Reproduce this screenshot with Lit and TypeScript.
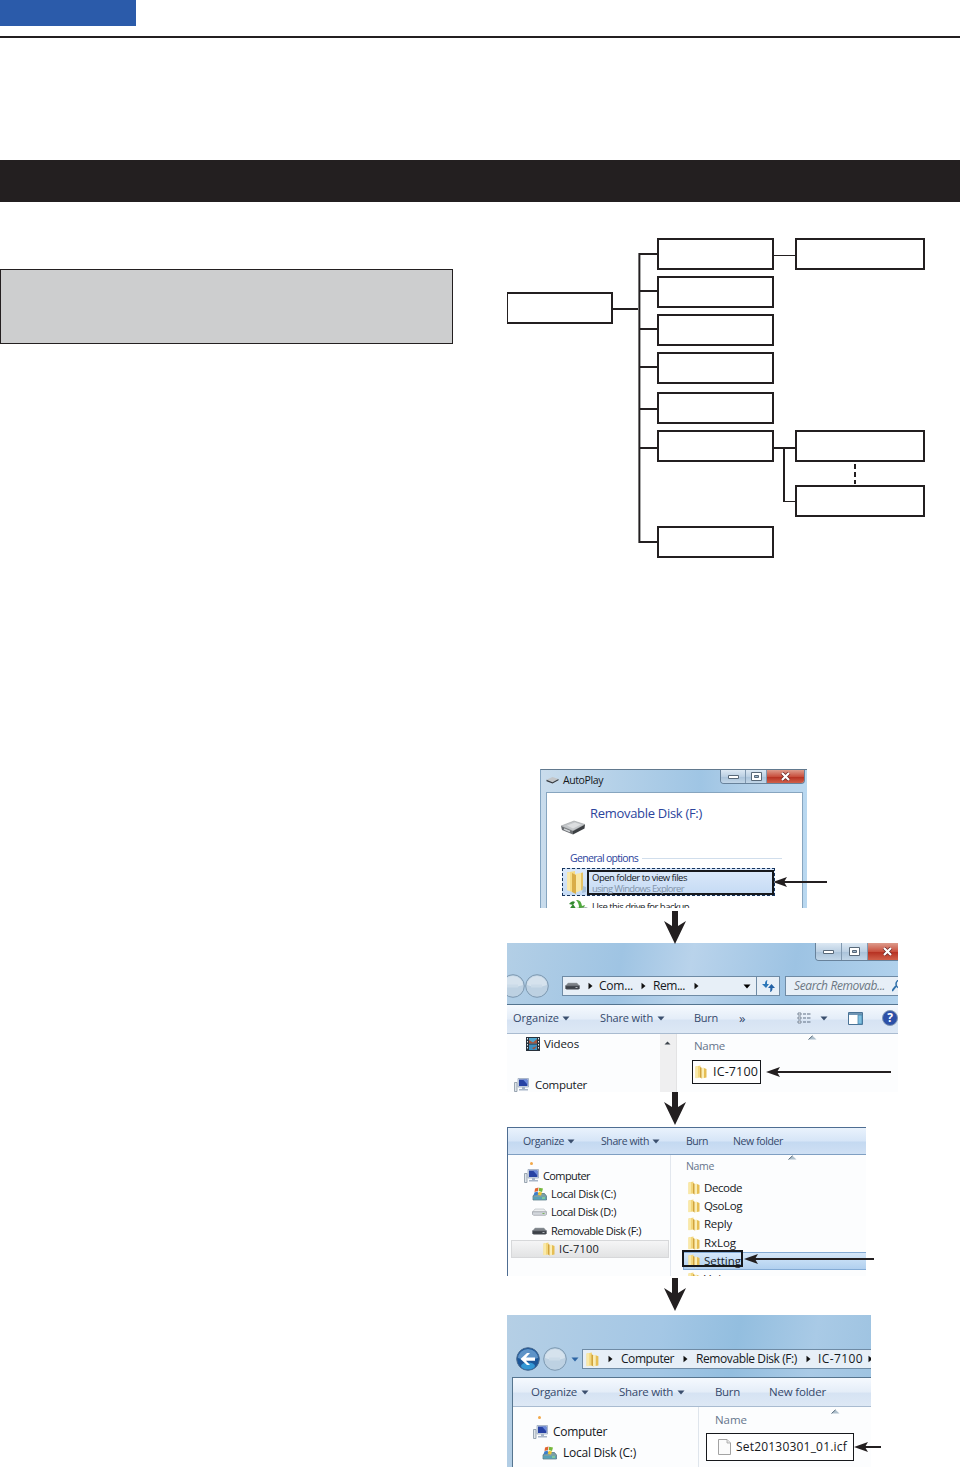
import { LitElement, css, html, svg } from 'lit';
import { customElement } from 'lit/decorators.js';

const ctx = document.createElement('canvas').getContext('2d')!;

// text set to a given width in px, by spreading the letters
const label = (text: string, width: number, size = 11, cls = '') => {
  ctx.font = `${cls.includes('search') ? 'italic ' : ''}${size}px "Open Sans"`;
  const spacing = (width - ctx.measureText(text).width) / text.length;
  return html`<span
    class="label ${cls}"
    style="font-size:${size}px;letter-spacing:${spacing.toFixed(3)}px"
    >${text}</span
  >`;
};

const folder = (size = 14) => html`<svg width=${size} height=${size} viewBox="0 0 14 14">
  <path d="M1.500 1.500 6.500.5v12l-5 .5z" fill="#f3d67c" />
  <path d="M1.500 1.500 4 1v12l-2.500.200z" fill="#f9e9a8" />
  <path d="M6 2 8 3v10.500l-2-1z" fill="#d0a33c" />
  <path d="M7.500 3 10 2.500V13l-2.500.5z" fill="#fbeeb5" />
  <path d="M10 3 12.500 4v8.500L10 13z" fill="#e6be54" />
</svg>`;

const bigFolder = html`<svg width="21" height="23" viewBox="0 0 21 23">
  <path d="M1 1.500 9 0v22L1 19z" fill="#f6dc85" />
  <path d="M1 1.500 4 1v19l-3-1z" fill="#fae9ab" />
  <path d="M9 3 17 1.500v17L9 22z" fill="#f9e7a4" />
  <path d="M6 2 10 4v19l-4-2z" fill="#d9ad48" />
  <path d="M15 2l2-.5v17l-2 1z" fill="#e6c263" />
  <path d="M17 15l3 1v5l-4 1z" fill="#a6bfd8" />
</svg>`;

const computer = html`<svg width="16" height="14" viewBox="0 0 16 14">
  <path d="M.5 4.500h2.500v9H.5z" fill="#dfe5ea" stroke="#8794a2" stroke-width=".8" />
  <path d="M4 .5h10.500v8.500H4z" fill="#dbe3ee" stroke="#9aa8be" stroke-width=".8" />
  <path d="M5 1.500h8.500v6.500H5z" fill="#2742a4" />
  <path d="M9 1.500h4.500v5z" fill="#6c8bdc" />
  <path d="M8 9h3v2H8zM5 11h9v1.500H5z" fill="#a7b5c8" />
</svg>`;

const videos = html`<svg width="14" height="14" viewBox="0 0 14 14">
  <path d="M0 0h14v14H0z" fill="#27313c" />
  <path d="M3 1h8v5.500H3z" fill="#4fa6cf" />
  <path d="M3 7.500h8V13H3z" fill="#3c91c4" />
  <path d="M3 3l4 2.500L11 2v4.500H3zM3 9l3 2 5-2-3 3.500z" fill="#a5553f" />
  <path d="M1.500 1v12M12.500 1v12" stroke="#e9eff3" stroke-dasharray="1.500 1.500" />
</svg>`;

const localDisk = html`<svg width="15" height="14" viewBox="0 0 15 14">
  <path d="M1 9 3 6.500h9.500L14.500 9v4H1z" fill="#7aa0a6" stroke="#496f7c" stroke-width=".7" />
  <path d="M1.500 10h12.500v2.500H1.500z" fill="#57a2b8" />
  <path d="M10 11h3" stroke="#a5ec83" />
  <path d="M3 1.500 6.500.5 6 4 2.500 5z" fill="#e1642f" />
  <path d="M7.200.7 11 1.500 10 5 6.700 4z" fill="#77b83c" />
  <path d="M2.300 5.500 6 4.500 5.500 8 2 8.500z" fill="#3c7ecb" />
  <path d="M6.600 4.700 10 5.500 9 8.500 6 8z" fill="#f2c530" />
</svg>`;

const drive = (dark = false) => html`<svg width="15" height="8" viewBox="0 0 15 8">
  <path d="M3 1h9l2.500 3H.5z" fill=${dark ? '#7b8086' : '#eef0f2'} stroke="#a2a8af" stroke-width=".5" />
  <path d="M.5 3.800h14v2.500l-1 1H1.500l-1-1z" fill=${dark ? '#3c4148' : '#d3d7dc'} stroke=${dark ? '#6d7279' : '#8b9198'} stroke-width=".6" />
  <path d="M10.500 5.500h2" stroke=${dark ? '#b0b6bc' : '#77b35b'} />
</svg>`;

const removable = html`<svg width="26" height="15" viewBox="0 0 26 15">
  <path d="M1 6 14 1l11 3.500L13 11z" fill="#c3c6c9" stroke="#8f9295" stroke-width=".5" />
  <path d="M7 5.500 15 2.500l6 2-8 4z" fill="#dcdee0" />
  <path d="M1 6l12 5v3.500L2 10z" fill="#6b6e72" />
  <path d="M25 4.500 13 11v3.500l11.500-6z" fill="#3c3f43" />
  <path d="M4 9l6 2.500" stroke="#cfd2d5" stroke-width="1.500" />
</svg>`;

const file = html`<svg width="13" height="16" viewBox="0 0 13 16">
  <path d="M.5.500h8.500l3.500 3.500v11.500H.5z" fill="#fbfbfb" stroke="#a3a3a3" />
  <path d="M9 .5V4h3.500" fill="#e4e4e4" stroke="#a3a3a3" stroke-width=".8" />
</svg>`;

const down = html`<svg width="8" height="5" viewBox="0 0 8 5"><path d="M.5.500h7L4 4.500z" /></svg>`;
const right = html`<svg width="5" height="8" viewBox="0 0 5 8"><path d="M.5.800 4.500 4 .5 7.200z" fill="#111" /></svg>`;
const sort = html`<svg class="sort" width="9" height="5" viewBox="0 0 9 5">
  <path d="M.5 4.500 4.500.800 8.500 4.500z" fill="#aebfcc" /><path d="M.5 4.500l4-3.700" stroke="#54697a" />
</svg>`;

const refresh = html`<svg width="15" height="14" viewBox="0 0 15 14">
  <path d="M6.500 1C4.500 1.500 4 3 4 5H1l4 4 3-4H6c0-2 0-3 .5-4z" fill="#2c77b8" />
  <path d="M9 13c2-.5 2.500-2 2.500-4H14L10.500 5 7 9h2.300c0 2 0 3-.3 4z" fill="#2361a5" />
</svg>`;

const views = html`<svg width="14" height="12" viewBox="0 0 14 12">
  <path d="M1 1h3v2H1zM1 5h3v2H1zM1 9h3v2H1z" fill="#fff" stroke="#5f6f83" stroke-width=".8" />
  <path d="M6 2h3M10 2h3.500M6 6h3M10 6h3.500M6 10h3M10 10h3.500" stroke="#5f6f83" />
</svg>`;

const pane = html`<svg width="15" height="13" viewBox="0 0 15 13">
  <path d="M.5.500h14v12H.5z" fill="#fff" stroke="#4a7396" />
  <path d="M1 1h13v2H1z" fill="#7095b4" /><path d="M10 3h4v9h-4z" fill="#7fc0e1" stroke="#4a86ac" stroke-width=".8" />
</svg>`;

const nav = (back = false) => html`<svg width="24" height="24" viewBox="0 0 24 24">
  <circle cx="12" cy="12" r="11.300" fill=${back ? '#1c5698' : '#bdd1e2'} stroke=${back ? '#496b90' : '#7c98b0'} />
  ${back
    ? svg`<path d="M2 11a10 9 0 0 1 20 0q-10 4-20 0z" fill="#5e93c7" /><ellipse cx="12" cy="19" rx="7" ry="3.500" fill="#3397d4" />
        <path d="M4.500 12 11 6h3l-4 4.500h9v3.200h-9L14 18h-3z" fill="#fff" />`
    : svg`<path d="M2 11a10 9 0 0 1 20 0q-10 4-20 0z" fill="#d5e2ed" /><path d="M6 12h11" stroke="#cbdbe8" stroke-width="3" />`}
</svg>`;

const backup = html`<svg width="25" height="14" viewBox="0 0 25 14">
  <path d="M10 1q5-1 6 6l3-1-3 7-6-4 3-.5Q13 4 10 1z" fill="#50a83e" />
  <path d="M2 12l5-7 4 6-3-.5q-3 0-4 3zM3 5q3-4 6-2l-2 3z" fill="#328a2f" />
  <path d="M14 9l6-1 4 2-5 3z" fill="#a3aaae" />
</svg>`;

const windowButtons = html`<div class="win-buttons">
  <i><svg width="11" height="4" viewBox="0 0 11 4"><path d="M.5.500h10v3H.5z" fill="#fff" stroke="#586878" /></svg></i>
  <i><svg width="11" height="9" viewBox="0 0 11 9"><path d="M.5.500h10v8H.5z" fill="#fff" stroke="#586878" /><path d="M3.500 3.500h4v2h-4z" fill="#9db5cb" stroke="#586878" /></svg></i>
  <i class="close"><svg width="11" height="9" viewBox="0 0 11 9"><path d="M2 1l7 7M9 1 2 8" stroke="#6b2626" stroke-width="3.600" /><path d="M2 1l7 7M9 1 2 8" stroke="#fff" stroke-width="2.200" /></svg></i>
</div>`;

const stepArrow = html`<svg class="step" width="22" height="33" viewBox="0 0 22 33">
  <path d="M8 0h6v15l8-5-11 23L0 10l8 5z" fill="#231f20" />
</svg>`;

const callout = (length: number) => html`<svg class="callout" width=${length} height="12" viewBox="0 0 ${length} 12">
  <path d="M8 6h${length - 8}" stroke="#231f20" stroke-width="2" />
  <path d="M0 6 14 1l-3 5 3 5z" fill="#231f20" />
</svg>`;

@customElement('folder-tree')
export class FolderTree extends LitElement {
  nodes = [
    [150, 0, 117], [150, 38, 117], [150, 76, 117], [150, 114, 117], [150, 154, 117],
    [150, 192, 117], [150, 288, 117], [288, 0, 130], [288, 192, 130], [288, 247, 130],
  ];

  branches = [16, 53, 91, 129, 171, 210, 304];

  render() {
    return html`<svg width="453" height="320" viewBox="0 0 453 320" stroke="#231f20" stroke-width="2" fill="none">
      <path d="M0 54h106v32H0zM1 56v28h103V56z" fill="#231f20" fill-rule="evenodd" stroke="none" />
      <path d="M106 71h26" />
      <path d="M131.500 15v290" stroke="#777" stroke-width="1" />
      <path d="M132.500 15v290" stroke-width="1" />
      <path d="M133.500 15v290" stroke="#aaa" stroke-width="1" />
      ${this.branches.map((y) => svg`<path d="M133 ${y}h17" />`)}
      ${this.nodes.map(([x, y, w]) => svg`<rect x=${x + 1} y=${y + 1} width=${w - 2} height="30" />`)}
      <path d="M267 17.500h21M277 263.500h11" stroke-width="1" />
      <path d="M267 210h21M277 210v54" />
      <path d="M348 226v20" stroke-dasharray="5 3" />
    </svg>`;
  }

  static styles = css`
    :host,
    svg {
      display: block;
    }
  `;
}

@customElement('app-root')
export class AppRoot extends LitElement {
  autoPlay() {
    return html`<section class="window autoplay">
      <div class="title">
        <svg width="13" height="8" viewBox="0 0 26 15">
          <path d="M1 7 13 1.500 25 5.500 13 12z" fill="#c3c6c9" />
          <path d="M1 7l12 5 12-6.500V8l-12 6.500L1 10z" fill="#36393d" />
        </svg>
        ${label('AutoPlay', 40, 10.5, 'dark')} ${windowButtons}
      </div>
      <div class="panel">
        <div class="disk">${removable}${label('Removable Disk (F:)', 112, 13, 'blue')}</div>
        <div class="group">${label('General options', 68, 10.5, 'blue')}<hr /></div>
        <div class="option">
          ${bigFolder}
          <div class="marked">
            ${label('Open folder to view files', 95, 9.5, 'dark')}
            ${label('using Windows Explorer', 92, 9.5, 'muted')}
          </div>
        </div>
        <div class="option-next">${backup}${label('Use this drive for backup', 97, 9.5, 'dark')}</div>
      </div>
    </section>`;
  }

  removableDisk() {
    return html`<section class="window explorer-b">
      ${windowButtons}
      <div class="address">
        <div class="navs">${nav()}${nav()}</div>
        <b></b>
        <div class="path">
          ${drive(true)}${right}${label('Com...', 34, 12, 'dark')}${right}${label('Rem...', 32, 12, 'dark')}${right}
          <span class="drop">${down}</span>
          <span class="reload">${refresh}</span>
        </div>
        <div class="find">
          ${label('Search Removab...', 91, 12, 'search')}
          <svg width="6" height="12" viewBox="0 0 6 12"><path d="M0 11 4 6" stroke="#2d6ea9" stroke-width="2" /><circle cx="8" cy="4" r="4" fill="none" stroke="#2d6ea9" stroke-width="1.500" /></svg>
        </div>
      </div>
      <div class="toolbar">
        ${label('Organize', 46)}${down}${label('Share with', 53)}${down}${label('Burn', 24)}${label('»', 8, 13)}
        ${views}${down}${pane}
        <span class="help">?</span>
      </div>
      <div class="body">
        <div class="side">
          <div class="row videos">${videos}${label('Videos', 35, 11.5, 'dark')}</div>
          <div class="row">${computer}${label('Computer', 52, 11.5, 'dark')}</div>
        </div>
        <div class="scroll"><svg width="7" height="4" viewBox="0 0 7 4"><path d="M.5 3.500 3.500.500l3 3z" fill="#3d444c" /></svg></div>
        <div class="list">
          <div class="head">${label('Name', 31, 11.5, 'name')}${sort}</div>
          <div class="marked">${folder()}${label('IC-7100', 45, 12.5, 'dark')}</div>
        </div>
      </div>
    </section>`;
  }

  ic7100() {
    const folders: [string, number][] = [['Decode', 38], ['QsoLog', 38], ['Reply', 28], ['RxLog', 32], ['Setting', 37], ['Voice', 30]];
    return html`<section class="window explorer-c">
      <div class="toolbar">
        ${label('Organize', 41, 10.5)}${down}${label('Share with', 48, 10.5)}${down}${label('Burn', 22, 10.5)}${label('New folder', 50, 10.5)}
      </div>
      <div class="body">
        <div class="side">
          <div class="row l0 star">${computer}${label('Computer', 47, 11, 'dark')}</div>
          <div class="row l1">${localDisk}${label('Local Disk (C:)', 65, 11, 'dark')}</div>
          <div class="row l1">${drive()}${label('Local Disk (D:)', 65, 11, 'dark')}</div>
          <div class="row l1">${drive(true)}${label('Removable Disk (F:)', 90, 11, 'dark')}</div>
          <div class="row l2">${folder()}${label('IC-7100', 40, 11, 'dark')}</div>
        </div>
        <div class="list">
          <div class="head">${label('Name', 28, 10.5, 'name')}${sort}</div>
          ${folders.map(
            ([name, width]) => html`<div class="row ${name === 'Setting' ? 'selected' : ''}">
              ${folder()}${label(name, width, 11.5, 'dark')}
            </div>`
          )}
        </div>
      </div>
    </section>`;
  }

  setting() {
    return html`<section class="window explorer-d">
      <div class="address">
        ${nav(true)}${nav()}<span class="recent">${down}</span>
        <div class="path">
          ${folder(15)}${right}${label('Computer', 53, 12, 'dark')}${right}${label('Removable Disk (F:)', 101, 12, 'dark')}
          ${right}${label('IC-7100', 45, 12, 'dark')}${right}
        </div>
      </div>
      <div class="inner">
        <div class="toolbar">
          ${label('Organize', 46, 11.5)}${down}${label('Share with', 54, 11.5)}${down}${label('Burn', 25, 11.5)}${label('New folder', 57, 11.5)}
        </div>
        <div class="body">
          <div class="side">
            <div class="row l0 star">${computer}${label('Computer', 54, 12, 'dark')}</div>
            <div class="row l1">${localDisk}${label('Local Disk (C:)', 73, 12, 'dark')}</div>
          </div>
          <div class="list">
            <div class="head">${label('Name', 32, 11.5, 'name')}${sort}</div>
            <div class="marked">${file}${label('Set20130301_01.icf', 111, 12, 'dark')}</div>
          </div>
        </div>
      </div>
    </section>`;
  }

  render() {
    return html`
      <div class="tab"></div>
      <div class="rule"></div>
      <div class="band"></div>
      <main>
        <div class="note"></div>
        <div class="figures">
          <folder-tree></folder-tree>
          <div class="frame a">${this.autoPlay()}${callout(54)}</div>
          ${stepArrow}
          <div class="frame b">${this.removableDisk()}${callout(125)}</div>
          ${stepArrow}
          <div class="frame c">${this.ic7100()}${callout(130)}</div>
          ${stepArrow}
          <div class="frame d">${this.setting()}${callout(27)}</div>
        </div>
      </main>
    `;
  }

  static styles = css`
    :host {
      display: block;
      height: 1467px;
      overflow: hidden;
      background: #fff;
      font-family: 'Open Sans', 'Noto Sans', sans-serif;
    }

    * {
      box-sizing: border-box;
    }

    svg {
      display: block;
      flex: none;
    }

    .tab {
      width: 136px;
      height: 26px;
      background: #2b5baa;
    }

    .rule {
      height: 2px;
      margin-top: 10px;
      background: #231f20;
    }

    .band {
      height: 42px;
      margin-top: 122px;
      background: #231f20;
    }

    main {
      display: grid;
      grid-template-columns: 507px 453px;
    }

    .note {
      width: 453px;
      height: 75px;
      margin-top: 67px;
      border: 1px solid #231f20;
      background: #cdcecf;
    }

    .figures {
      padding-top: 36px;
    }

    .frame {
      position: relative;
    }

    .frame.a {
      margin: 211px 0 3px 33px;
    }

    .frame.b {
      margin-top: -1px;
    }

    .frame.c {
      margin: 2px 0;
    }

    .frame.d {
      margin-top: 4px;
    }

    .step {
      position: relative;
      z-index: 1;
      margin-left: 157px;
    }

    .callout {
      position: absolute;
    }

    .a .callout {
      left: 233px;
      top: 107px;
    }

    .b .callout {
      left: 259px;
      top: 123px;
    }

    .c .callout {
      left: 237px;
      top: 126px;
    }

    .d .callout {
      left: 347px;
      top: 126px;
    }

    .window {
      overflow: hidden;
    }

    .label {
      display: block;
      flex: none;
      line-height: 14px;
      white-space: pre;
      color: #35496b;
    }

    .dark {
      color: #15181c;
    }

    .blue {
      color: #2c449c;
    }

    .muted {
      color: #8293a8;
    }

    .name {
      color: #66758c;
    }

    .search {
      font-style: italic;
      color: #6c7783;
    }

    .win-buttons {
      display: grid;
      border: 1px solid #68829b;
      border-top: 0;
      border-radius: 0 0 4px 4px;
      overflow: hidden;
    }

    .win-buttons i {
      display: grid;
      place-items: center;
      border-right: 1px solid #8199b0;
      background: linear-gradient(#dce8f3, #bcd0e3 50%, #a9c2d9 52%, #c2d6e8);
    }

    .win-buttons .close {
      border: 0;
      background: linear-gradient(#dd9b8c, #c9513f 50%, #b52f20 52%, #d0604a);
    }

    .toolbar {
      display: grid;
      align-items: center;
      fill: #3b4f6e;
      border-bottom: 1px solid #a9bbd0;
      background: linear-gradient(#f5f9fe, #e4edf8 50%, #d6e3f3 54%, #dde8f5);
    }

    .body,
    .row,
    .path,
    .address {
      display: flex;
    }

    .row,
    .path,
    .address {
      align-items: center;
    }

    .side .row {
      height: 18px;
      gap: 5px;
    }

    .head {
      display: flex;
      position: relative;
    }

    .sort {
      position: absolute;
      top: -6px;
    }

    .star {
      position: relative;
    }

    .star::before {
      content: '';
      position: absolute;
      top: -5px;
      left: 25px;
      width: 3px;
      height: 3px;
      border-radius: 50%;
      background: #f2a94b;
    }

    /* AutoPlay dialog */
    .autoplay {
      width: 267px;
      height: 139px;
      padding: 0 4px 0 5px;
      background: linear-gradient(90deg, #c9dcec, #b3d0e8 30%, #9fc5e4 60%, #b9d3ea 85%, #b9d8f0);
      border-left: 1px solid #84a5c2;
      border-top: 1px solid #62798e;
    }

    .title {
      display: flex;
      align-items: center;
      height: 22px;
      gap: 4px;
      padding-bottom: 2px;
    }

    .title .win-buttons {
      grid-template-columns: 25px 21px 37px;
      align-self: flex-start;
      height: 14px;
      margin: 0 -2px 0 auto;
    }

    .autoplay .panel {
      height: 116px;
      padding-left: 16px;
      border: solid #87a5bf;
      border-width: 1px 1px 0;
      background: #fff;
    }

    .disk {
      display: flex;
      gap: 2px;
      height: 58px;
      padding-top: 13px;
    }

    .disk svg {
      margin-top: 14px;
      margin-left: -3px;
    }

    .disk .label {
      margin-left: 2px;
    }

    .group {
      display: flex;
      align-items: center;
      height: 14px;
      gap: 4px;
      padding-left: 7px;
    }

    .group hr {
      width: 140px;
      margin: 0;
      border: 0;
      border-top: 1px solid #d1deec;
    }

    .option {
      display: flex;
      align-items: center;
      width: 213px;
      height: 28px;
      margin: 3px 0 0 -1px;
      padding-left: 3px;
      border: 1px dashed #17345c;
      background: linear-gradient(#dce9fa, #c4daf4);
    }

    .option .marked {
      flex: 1;
      height: 25px;
      padding-left: 3px;
      border: 2px solid #16181c;
    }

    .option .label {
      line-height: 11px;
    }

    .option-next {
      display: flex;
      gap: 1px;
      padding: 3px 0 0 3px;
    }

    .option-next .label {
      margin-top: 1px;
    }

    /* Removable disk window */
    .explorer-b {
      width: 391px;
      height: 149px;
      background: linear-gradient(100deg, #b3cfe6, #9fc4e3 28%, #b9d3eb 45%, #9dc3e3 70%, #b4d4ee);
    }

    .explorer-b .win-buttons {
      grid-template-columns: 26px 26px 38px;
      width: 92px;
      height: 18px;
      margin-left: 308px;
    }

    .explorer-b .address {
      height: 43px;
      padding-top: 7px;
    }

    .navs {
      display: flex;
      margin-left: -6px;
    }

    .explorer-b b {
      width: 7px;
      height: 1px;
      margin: 0 4px;
      background: #7892aa;
    }

    .path,
    .find {
      height: 20px;
      border: 1px solid #6f8ba5;
      background: #e7eff7;
    }

    .explorer-b .path {
      display: grid;
      grid-template-columns: 23px 11px 42px 12px 41px 34px 28px 24px;
      width: 218px;
      margin-left: 5px;
      padding-left: 2px;
    }

    .drop {
      padding-left: 15px;
    }

    .reload {
      display: grid;
      place-items: center;
      align-self: stretch;
      border-left: 1px solid #6f8ba5;
    }

    .find {
      display: flex;
      gap: 7px;
      width: 120px;
      flex: none;
      align-items: center;
      margin-left: 5px;
      padding-left: 8px;
    }

    .explorer-b .toolbar {
      grid-template-columns: 49px 38px 57px 37px 45px 58px 23px 28px 34px 16px;
      height: 30px;
      padding: 0 0 2px 6px;
      border-top: 1px solid #54748f;
    }

    .help {
      width: 16px;
      height: 16px;
      border: 1px solid #8096b2;
      border-radius: 50%;
      background: #2c50a8;
      color: #fff;
      font-size: 12px;
      font-weight: bold;
      line-height: 14px;
      text-align: center;
    }

    .body {
      background: #fcfdfe;
    }

    .explorer-b .body {
      height: 60px;
    }

    .explorer-b .side {
      width: 153px;
      padding-left: 7px;
    }

    .explorer-b .side .row {
      height: 20px;
    }

    .explorer-b .side .videos {
      margin: 0 0 21px;
      padding-left: 12px;
      gap: 4px;
    }

    .scroll {
      width: 17px;
      padding: 7px 0 0 4px;
      background: #efeff0;
      border-right: 1px solid #e3e3e4;
    }

    .explorer-b .list {
      padding: 5px 0 0 15px;
    }

    .explorer-b .head {
      padding-left: 2px;
    }

    .explorer-b .head .sort {
      top: -4px;
      left: 116px;
    }

    .explorer-b .marked {
      display: flex;
      align-items: center;
      gap: 5px;
      width: 69px;
      height: 24px;
      margin-top: 7px;
      padding-left: 1px;
      border: 1.500px solid #16181c;
      background: #fff;
    }

    /* IC-7100 folder window */
    .explorer-c {
      width: 359px;
      height: 149px;
      border: solid #4e6d92;
      border-width: 1px 0 0 1px;
    }

    .explorer-c .toolbar {
      grid-template-columns: 44px 34px 51px 34px 47px 60px;
      height: 27px;
      padding-left: 15px;
      border-color: #7f9fc2;
      background: linear-gradient(#e9f2fc, #d6e5f7 50%, #c4d9f1 54%, #cfe0f4);
    }

    .explorer-c .body {
      height: 121px;
    }

    .explorer-c .side {
      width: 163px;
      padding: 12px 1px 0 3px;
      border-right: 1px solid #e2e7ee;
    }

    .explorer-c .l0 {
      gap: 3px;
      padding-left: 13px;
    }

    .explorer-c .side .l1 {
      gap: 4px;
      height: 18.300px;
      padding-left: 21px;
    }

    .explorer-c .side .l2 {
      gap: 3px;
      padding-left: 30px;
      border: 1px solid #d7d8da;
      background: linear-gradient(#f5f5f6, #e2e3e4);
    }

    .explorer-c .list {
      flex: 1;
      padding-top: 4px;
      padding-left: 12px;
    }

    .explorer-c .head {
      margin-bottom: 6px;
      padding-left: 3px;
    }

    .explorer-c .head .sort {
      top: -4px;
      left: 105px;
    }

    .explorer-c .list .row {
      gap: 3px;
      height: 18.200px;
      padding-left: 4px;
    }

    .explorer-c .selected {
      position: relative;
      border: 1px solid #84abd5;
      border-right: 0;
      background: linear-gradient(#d5e7f9, #b1d0ef);
    }

    .explorer-c .list .selected {
      padding-left: 3px;
    }

    .selected::after {
      content: '';
      box-sizing: border-box;
      position: absolute;
      top: -3px;
      left: -2px;
      width: 61px;
      height: 17px;
      border: 2px solid #16181c;
    }

    /* Setting folder window */
    .explorer-d {
      width: 364px;
      height: 152px;
      padding: 32px 0 0 5px;
      background: linear-gradient(100deg, #b5cfe5, #a4c7e5 40%, #93bedf 60%, #a9cae6 80%, #9cc2e0);
    }

    .explorer-d .address {
      height: 24px;
      padding-left: 4px;
      gap: 3px;
    }

    .recent {
      padding-left: 1px;
      fill: #2d65a4;
    }

    .explorer-d .path {
      flex: none;
      display: grid;
      grid-template-columns: 23px 13px 62px 13px 110px 12px 50px 5px;
      width: 300px;
      padding-left: 2px;
    }

    .explorer-d .inner {
      margin-top: 6px;
      border: solid #56758f;
      border-width: 1px 0 0 1px;
    }

    .explorer-d .toolbar {
      grid-template-columns: 50px 38px 58px 38px 54px 60px;
      height: 29px;
      padding-left: 18px;
    }

    .explorer-d .body {
      height: 61px;
    }

    .explorer-d .side {
      width: 186px;
      padding-top: 14px;
      border-right: 1px solid #dfe5ec;
    }

    .explorer-d .side .row {
      height: 21px;
      padding-left: 20px;
      gap: 4px;
    }

    .explorer-d .side .l1 {
      padding-left: 29px;
      gap: 6px;
    }

    .explorer-c .star::before {
      left: 19px;
    }

    .explorer-d .list {
      padding: 6px 0 0 7px;
    }

    .explorer-d .head {
      padding-left: 9px;
    }

    .explorer-d .head .sort {
      left: 125px;
      top: -4px;
    }

    .explorer-d .marked {
      display: flex;
      align-items: center;
      gap: 5px;
      width: 148px;
      height: 28px;
      margin-top: 6px;
      padding-left: 11px;
      border: 1px solid #16181c;
      background: #fff;
    }
  `;
}
